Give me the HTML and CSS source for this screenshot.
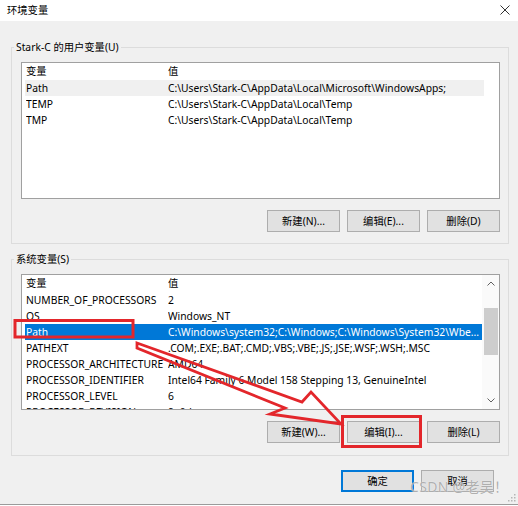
FILE: index.html
```html
<!DOCTYPE html>
<html lang="zh-CN">
<head>
<meta charset="utf-8">
<title>环境变量</title>
<link rel="stylesheet" href="styles.css">
</head>
<body>
<div class="window">
  <div class="titlebar">
    <span class="title">环境变量</span>
    <svg class="close" width="10" height="10" viewBox="0 0 10 10"><path d="M0.5 0.5L9.5 9.5M9.5 0.5L0.5 9.5" stroke="#333" stroke-width="1" fill="none"/></svg>
  </div>
  <div class="content">
    <fieldset class="group group-user">
      <legend>Stark-C 的用户变量(U)</legend>
      <div class="list list-user">
        <div class="rows">
          <div class="row head"><span>变量</span><span>值</span></div>
          <div class="row hover"><span>Path</span><span>C:\Users\Stark-C\AppData\Local\Microsoft\WindowsApps;</span></div>
          <div class="row"><span>TEMP</span><span>C:\Users\Stark-C\AppData\Local\Temp</span></div>
          <div class="row"><span>TMP</span><span>C:\Users\Stark-C\AppData\Local\Temp</span></div>
        </div>
      </div>
      <div class="btns">
        <button class="btn">新建(N)...</button>
        <button class="btn">编辑(E)...</button>
        <button class="btn">删除(D)</button>
      </div>
    </fieldset>
    <fieldset class="group group-sys">
      <legend>系统变量(S)</legend>
      <div class="list list-sys">
        <div class="rows">
          <div class="row head"><span>变量</span><span>值</span></div>
          <div class="row"><span>NUMBER_OF_PROCESSORS</span><span>2</span></div>
          <div class="row"><span>OS</span><span>Windows_NT</span></div>
          <div class="row selected"><span>Path</span><span>C:\Windows\system32;C:\Windows;C:\Windows\System32\Wbe...</span></div>
          <div class="row"><span>PATHEXT</span><span>.COM;.EXE;.BAT;.CMD;.VBS;.VBE;.JS;.JSE;.WSF;.WSH;.MSC</span></div>
          <div class="row"><span>PROCESSOR_ARCHITECTURE</span><span>AMD64</span></div>
          <div class="row"><span>PROCESSOR_IDENTIFIER</span><span>Intel64 Family 6 Model 158 Stepping 13, GenuineIntel</span></div>
          <div class="row"><span>PROCESSOR_LEVEL</span><span>6</span></div>
          <div class="row"><span>PROCESSOR_REVISION</span><span>9e0d</span></div>
        </div>
        <div class="vscroll">
          <div class="sbtn"><svg width="8" height="5" viewBox="0 0 8 5"><path d="M0.5 4.5L4 1L7.5 4.5" stroke="#606060" fill="none" stroke-width="1"/></svg></div>
          <div class="track"><div class="thumb"></div></div>
          <div class="sbtn"><svg width="8" height="5" viewBox="0 0 8 5"><path d="M0.5 0.5L4 4L7.5 0.5" stroke="#606060" fill="none" stroke-width="1"/></svg></div>
        </div>
      </div>
      <div class="btns">
        <button class="btn">新建(W)...</button>
        <button class="btn">编辑(I)...</button>
        <button class="btn">删除(L)</button>
      </div>
    </fieldset>
    <div class="dialog-btns">
      <button class="btn default">确定</button>
      <button class="btn">取消</button>
    </div>
  </div>
  <svg class="annot" width="518" height="506" viewBox="0 0 518 506">
    <rect x="15" y="320.5" width="118" height="16.5" fill="none" stroke="#e3262b" stroke-width="3"/>
    <rect x="342.5" y="416.5" width="78" height="30" fill="none" stroke="#e3262b" stroke-width="3"/>
    <polygon points="137,343 302,402 311,392 341,424 270,414 285,408 137,348" fill="none" stroke="#e3262b" stroke-width="2.8" stroke-linejoin="miter"/>
  </svg>
  <div class="watermark">CSDN @老吴！</div>
  <svg class="grip" width="8" height="8" viewBox="0 0 8 8">
    <rect x="6" y="0" width="1.5" height="1.5" fill="#b5b5b5"/>
    <rect x="3" y="3" width="1.5" height="1.5" fill="#b5b5b5"/>
    <rect x="6" y="3" width="1.5" height="1.5" fill="#b5b5b5"/>
    <rect x="0" y="6" width="1.5" height="1.5" fill="#b5b5b5"/>
    <rect x="3" y="6" width="1.5" height="1.5" fill="#b5b5b5"/>
    <rect x="6" y="6" width="1.5" height="1.5" fill="#b5b5b5"/>
  </svg>
</div>
</body>
</html>
```

FILE: styles.css
```css
* { box-sizing: border-box; }

html, body {
  margin: 0;
  padding: 0;
  background: #ffffff;
}

body {
  width: 518px;
  height: 506px;
  overflow: hidden;
  font-family: "Noto Sans", "Noto Sans CJK SC", sans-serif;
  font-size: 10.3px;
  color: #000;
}

.window {
  position: relative;
  width: 518px;
  height: 505px;
  background: #f0f0f0;
  border-bottom: 1px solid #9b9b9b;
}

.titlebar {
  height: 21px;
  background: #ffffff;
  display: flex;
  align-items: center;
  justify-content: space-between;
  padding: 0 8px 2px 7px;
}

.title {
  line-height: 16px;
}

.close {
  display: block;
}

.content {
  display: flex;
  flex-direction: column;
  padding: 0 9px 0 11px;
}

.group {
  margin: 0;
  width: 498px;
  border: 1px solid #dcdcdc;
  padding: 7px 8px 11px 9px;
  min-width: 0;
}

.group legend {
  padding: 0 2px;
  margin-left: -7px;
  line-height: 16px;
  height: 16px;
}

.group-user {
  margin-top: 18px;
}

.group-sys {
  margin-top: 7px;
  padding-bottom: 12px;
}

.list {
  background: #ffffff;
  border: 1px solid #a0a0a0;
  display: flex;
  overflow: hidden;
}

.list-user { height: 137px; }
.list-sys { height: 136px; }

.rows {
  flex: 1;
  min-width: 0;
  overflow: hidden;
}

.row {
  display: grid;
  grid-template-columns: 142px 1fr;
  height: 16px;
  line-height: 16px;
  margin: 0 0 0 3px;
  padding-left: 1px;
  white-space: nowrap;
}

.list-user .row { margin-right: 15px; }

.row span { overflow: hidden; }

.row.head {
  height: 17px;
  line-height: 17px;
}

.row.hover { background: #f0f0f0; }

.row.selected {
  background: #0078d7;
  color: #ffffff;
}

.vscroll {
  width: 17px;
  display: flex;
  flex-direction: column;
  background: #fafafa;
}

.sbtn {
  height: 17px;
  display: flex;
  align-items: center;
  justify-content: center;
}

.track {
  flex: 1;
  padding: 16px 1px 0 2px;
}

.thumb {
  height: 47px;
  background: #cdcdcd;
}

.btns {
  display: flex;
  justify-content: flex-end;
  gap: 7px;
  margin-top: 11px;
}

.btn {
  width: 73px;
  height: 22px;
  padding: 0;
  margin: 0;
  background: #e1e1e1;
  border: 1px solid #adadad;
  font-family: inherit;
  font-size: 10.3px;
  color: #000;
  line-height: 18px;
}

.btn.default {
  border: 1px solid #0078d7;
  box-shadow: inset 0 0 0 1px #0078d7;
}

.dialog-btns {
  display: flex;
  justify-content: flex-end;
  gap: 7px;
  margin-top: 14px;
  padding-right: 15px;
}

.annot {
  position: absolute;
  left: 0;
  top: 0;
  pointer-events: none;
}

.watermark {
  position: absolute;
  left: 410px;
  top: 477px;
  font-size: 14px;
  line-height: 20px;
  color: rgba(150, 150, 150, 0.75);
  text-shadow: 0 0 1px #ffffff;
  letter-spacing: 0.3px;
}

.grip {
  position: absolute;
  right: 2px;
  bottom: 2px;
}
```
